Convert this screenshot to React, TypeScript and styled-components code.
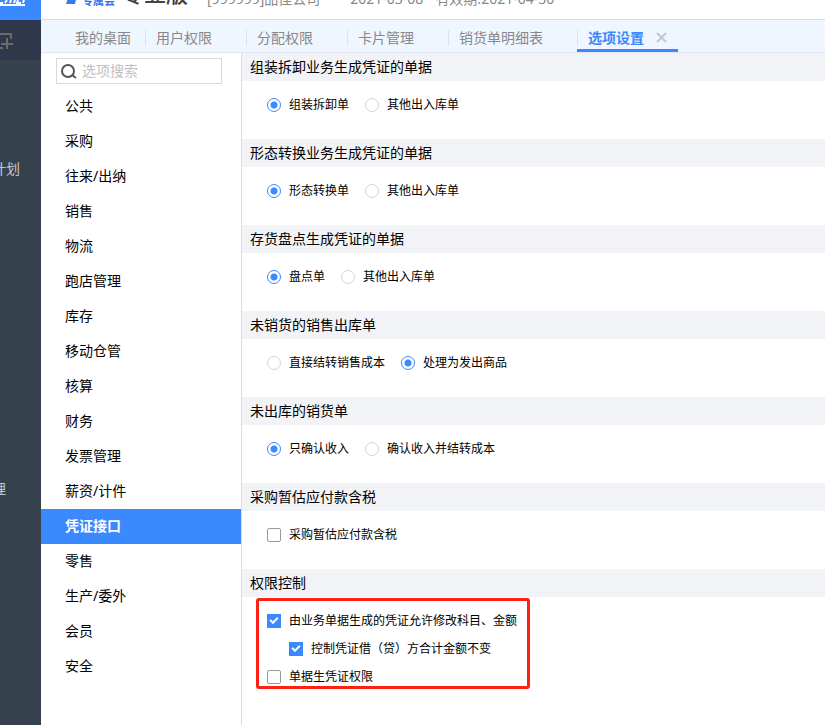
import React from "react";
import styled, { createGlobalStyle } from "styled-components";

const GlobalStyle = createGlobalStyle`
  *, *::before, *::after { box-sizing: border-box; }
  body {
    margin: 0;
    background: #fff;
    color: #000;
    font: 14px/20px "Noto Sans", "Noto Sans CJK SC", sans-serif;
    overflow: hidden;
  }
  button, input { font: inherit; color: inherit; }
`;

const Page = styled.div`
  display: grid;
  grid-template-columns: 41px minmax(0, 1fr);
  height: 100vh;
  overflow: hidden;
`;

const Rail = styled.nav`
  display: flex;
  flex-direction: column;
  background: #36414e;
  overflow: hidden;
`;

const RailLogo = styled.div`
  display: flex;
  align-items: flex-start;
  height: 20px;
  flex: none;
  background: #3a89ff;
`;

const RailAdd = styled.button`
  display: flex;
  align-items: center;
  height: 40px;
  flex: none;
  padding: 0;
  border: 0;
  background: #2e384a;
`;

const RailItem = styled.a<{ $before: number; $end: number }>`
  display: flex;
  justify-content: flex-end;
  flex: none;
  margin-top: ${(p) => p.$before}px;
  padding-right: ${(p) => p.$end}px;
  color: #c4c8cd;
  text-decoration: none;
  white-space: nowrap;
`;

const Content = styled.div`
  display: flex;
  flex-direction: column;
  min-width: 0;
  min-height: 0;
`;

const Header = styled.header`
  display: flex;
  align-items: flex-end;
  flex: none;
  height: 20px;
  padding: 0 24px 10px;
  border-bottom: 1px solid #d9dce0;
  overflow: hidden;
  color: #888;
  white-space: nowrap;
`;

const Badge = styled.span`
  display: flex;
  align-items: flex-end;
  gap: 5px;
  color: #3a6ff5;
  font-size: 11px;
  font-weight: 700;
  line-height: 16px;
`;

const Edition = styled.strong`
  margin: 0 19px 0 7px;
  padding-bottom: 4px;
  color: #444;
  font-size: 22px;
  font-weight: 500;
  line-height: 24px;
`;

const Company = styled.span`
  margin-right: 30px;
`;

const LoginDate = styled.span`
  margin-right: 12px;
`;

const TabBar = styled.div`
  display: flex;
  flex: none;
  height: 33px;
  padding-left: 23px;
  background: #f0f6ff;
  border-bottom: 1px solid #e1e6f0;
`;

const Tab = styled.div<{ $active?: boolean }>`
  display: flex;
  align-items: center;
  padding: 6px 34px 0 0;
  border-bottom: 3px solid ${(p) => (p.$active ? "#3a89ff" : "transparent")};
  &::before {
    content: "";
    width: 1px;
    height: 16px;
    margin-right: 10px;
    background: #dde3ee;
  }
  &:first-child { padding-right: 14px; }
  &:first-child::before { background: transparent; }
  &:last-child { padding-right: 11px; }
`;

const TabLabel = styled.button<{ $active?: boolean }>`
  padding: 0;
  border: 0;
  background: none;
  color: ${(p) => (p.$active ? "#3a89ff" : "#888")};
  font-weight: ${(p) => (p.$active ? 700 : 400)};
`;

const CloseButton = styled.button`
  display: flex;
  margin-left: 12px;
  padding: 0;
  border: 0;
  background: none;
`;

const Body = styled.div`
  display: grid;
  grid-template-columns: 201px minmax(0, 1fr);
  flex: 1;
  min-height: 0;
`;

const Sidebar = styled.aside`
  padding-top: 5px;
  border-right: 1px solid #d9dce0;
`;

const Search = styled.label`
  display: flex;
  align-items: center;
  gap: 5px;
  height: 26px;
  margin: 0 19px 5px 15px;
  padding-left: 4px;
  border: 1px solid #d9d9d9;
`;

const SearchInput = styled.input`
  flex: 1;
  min-width: 0;
  padding: 0;
  border: 0;
  outline: 0;
  background: none;
  &::placeholder { color: #bfbfbf; opacity: 1; }
`;

const Category = styled.button<{ $active: boolean }>`
  display: block;
  width: 100%;
  height: 35px;
  padding: 0 24px 2px;
  border: 0;
  text-align: left;
  background: ${(p) => (p.$active ? "#3a89ff" : "transparent")};
  color: ${(p) => (p.$active ? "#fff" : "#000")};
  font-weight: ${(p) => (p.$active ? 700 : 400)};
`;

const Settings = styled.main`
  overflow: hidden;
`;

const Section = styled.fieldset`
  min-width: 0;
  margin: 0;
  padding: 0;
  border: 0;
`;

const SectionTitle = styled.legend`
  width: 100%;
  padding: 0 8px;
  background: #f2f3f7;
  line-height: 28px;
`;

const Options = styled.div`
  display: flex;
  gap: 16px;
  padding: 10px 25px 20px;
`;

const Group = styled.div`
  position: relative;
  display: flex;
  flex-direction: column;
`;

const Highlight = styled.div`
  position: absolute;
  inset: -9px -13px 2px -11px;
  border: 3px solid #ff2014;
  border-radius: 3px;
  pointer-events: none;
`;

const Option = styled.label<{ $nested?: boolean }>`
  display: flex;
  align-items: center;
  gap: 8px;
  height: 28px;
  padding-left: ${(p) => (p.$nested ? 22 : 0)}px;
  font-size: 12px;
  white-space: nowrap;
`;

const CenteredParens = styled.span`
  font-family: "Noto Sans", "Noto Sans CJK TC", sans-serif;
  text-spacing-trim: space-all;
`;

const Radio = styled.input`
  appearance: none;
  width: 14px;
  height: 14px;
  margin: 0;
  border: 1px solid #d5d5d5;
  border-radius: 50%;
  background: #fff;
  &:checked {
    border-color: #3a89ff;
    background: radial-gradient(circle, #3a89ff 3px, #fff 4px);
  }
`;

const Checkbox = styled.input`
  appearance: none;
  width: 14px;
  height: 14px;
  margin: 0;
  border: 1px solid #999;
  border-radius: 2px;
  background: #fff;
  &:checked {
    display: grid;
    place-items: center;
    border-color: #3a89ff;
    border-radius: 0;
    background: #3a89ff;
  }
  &:checked::before {
    content: "";
    width: 8px;
    height: 5px;
    margin-bottom: 3px;
    border: solid #fff;
    border-width: 0 0 2px 2px;
    transform: rotate(-45deg);
  }
`;

const categories = [
  "公共", "采购", "往来/出纳", "销售", "物流", "跑店管理", "库存", "移动仓管", "核算",
  "财务", "发票管理", "薪资/计件", "凭证接口", "零售", "生产/委外", "会员", "安全",
];

const tabs = ["我的桌面", "用户权限", "分配权限", "卡片管理", "销货单明细表"];

const radioSections = [
  { title: "组装拆卸业务生成凭证的单据", options: ["组装拆卸单", "其他出入库单"], selected: 0 },
  { title: "形态转换业务生成凭证的单据", options: ["形态转换单", "其他出入库单"], selected: 0 },
  { title: "存货盘点生成凭证的单据", options: ["盘点单", "其他出入库单"], selected: 0 },
  { title: "未销货的销售出库单", options: ["直接结转销售成本", "处理为发出商品"], selected: 1 },
  { title: "未出库的销货单", options: ["只确认收入", "确认收入并结转成本"], selected: 0 },
];

export default function App() {
  const [category, setCategory] = React.useState("凭证接口");
  return (
    <Page>
      <GlobalStyle />
      <Rail>
        <RailLogo>
          <svg width="27" height="7" viewBox="0 0 27 7" fill="none" stroke="#fff" strokeWidth="2">
            <path d="M0 3h3M7 0l-2 3M11 0l-1 3M15 0l-1 3M18 0l-1 3h4M24 0l-1 3M0 5h25" />
          </svg>
        </RailLogo>
        <RailAdd aria-label="新增">
          <svg width="14" height="20" viewBox="0 0 14 20" fill="none" stroke="#6d6b69" strokeWidth="2">
            <path d="M0 4h11v5M0 18h3M7 8v11M1 14h12" />
          </svg>
        </RailAdd>
        <RailItem href="#plan" $before={99} $end={21}>计划</RailItem>
        <RailItem href="#manage" $before={300} $end={35}>理</RailItem>
      </Rail>
      <Content>
        <Header>
          <Badge>
            <svg width="12" height="14" viewBox="0 0 12 14">
              <path d="M4 0h8l-2 9H1z" fill="#2f7df6" />
            </svg>
            专属会
          </Badge>
          <Edition>专业版</Edition>
          <Company>[999999]品佳公司</Company>
          <LoginDate>2021-03-08</LoginDate>
          <span>有效期:2021-04-30</span>
        </Header>
        <TabBar>
          {tabs.map((t) => (
            <Tab key={t}><TabLabel>{t}</TabLabel></Tab>
          ))}
          <Tab $active>
            <TabLabel $active>选项设置</TabLabel>
            <CloseButton aria-label="关闭">
              <svg width="11" height="11" viewBox="0 0 11 11" stroke="#c4c6ca" strokeWidth="2">
                <path d="M1 1l9 9M10 1l-9 9" />
              </svg>
            </CloseButton>
          </Tab>
        </TabBar>
        <Body>
          <Sidebar>
            <Search>
              <svg width="16" height="16" viewBox="0 0 16 16" fill="none" stroke="#555" strokeWidth="2">
                <circle cx="7" cy="8" r="6" />
                <path d="M11 12l4 3" />
              </svg>
              <SearchInput placeholder="选项搜索" aria-label="选项搜索" />
            </Search>
            {categories.map((c) => (
              <Category key={c} $active={c === category} onClick={() => setCategory(c)}>{c}</Category>
            ))}
          </Sidebar>
          <Settings>
            {radioSections.map((s) => (
              <Section key={s.title}>
                <SectionTitle>{s.title}</SectionTitle>
                <Options>
                  {s.options.map((o, i) => (
                    <Option key={o}>
                      <Radio type="radio" name={s.title} defaultChecked={i === s.selected} />
                      {o}
                    </Option>
                  ))}
                </Options>
              </Section>
            ))}
            <Section>
              <SectionTitle>采购暂估应付款含税</SectionTitle>
              <Options>
                <Option><Checkbox type="checkbox" />采购暂估应付款含税</Option>
              </Options>
            </Section>
            <Section>
              <SectionTitle>权限控制</SectionTitle>
              <Options>
                <Group>
                  <Option><Checkbox type="checkbox" defaultChecked />由业务单据生成的凭证允许修改科目、金额</Option>
                  <Option $nested>
                    <Checkbox type="checkbox" defaultChecked />
                    <span>控制凭证借<CenteredParens lang="zh-Hant">（贷）</CenteredParens>方合计金额不变</span>
                  </Option>
                  <Option><Checkbox type="checkbox" />单据生凭证权限</Option>
                  <Highlight />
                </Group>
              </Options>
            </Section>
          </Settings>
        </Body>
      </Content>
    </Page>
  );
}
